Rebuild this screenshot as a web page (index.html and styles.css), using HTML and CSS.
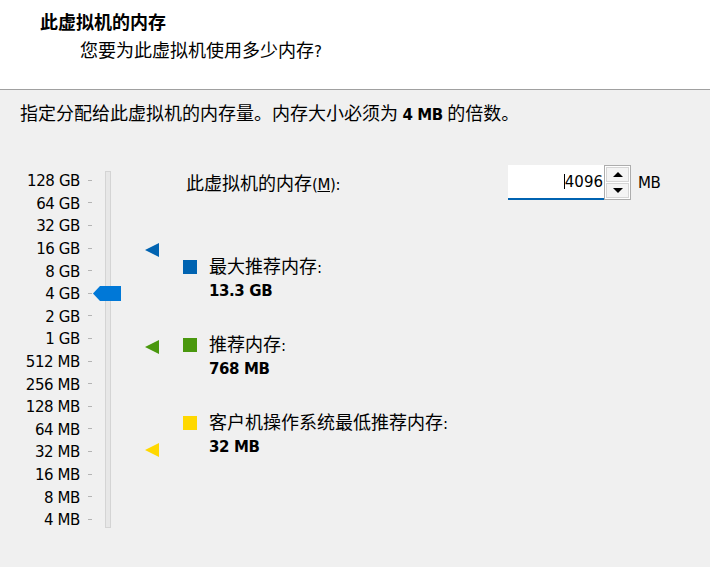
FILE: index.html
```html
<!DOCTYPE html>
<html lang="zh-CN">
<head>
<meta charset="utf-8">
<title>此虚拟机的内存</title>
<link rel="stylesheet" href="styles.css">
</head>
<body>
<div class="header">
  <div class="title"><span class="zh">此虚拟机的内存</span></div>
  <div class="subtitle"><span class="zh">您要为此虚拟机使用多少内存</span>?</div>
</div>
<div class="content">
  <p class="intro"><span class="zh">指定分配给此虚拟机的内存量。内存大小必须为</span> <b>4 MB</b> <span class="zh">的倍数。</span></p>
  <div class="main">
    <div class="slider">
      <div class="scale">
        <div class="row"><span class="lbl">128 GB</span><span class="tick"></span></div>
        <div class="row"><span class="lbl">64 GB</span><span class="tick"></span></div>
        <div class="row"><span class="lbl">32 GB</span><span class="tick"></span></div>
        <div class="row"><span class="lbl">16 GB</span><span class="tick"></span></div>
        <div class="row"><span class="lbl">8 GB</span><span class="tick"></span></div>
        <div class="row"><span class="lbl">4 GB</span><span class="tick"></span></div>
        <div class="row"><span class="lbl">2 GB</span><span class="tick"></span></div>
        <div class="row"><span class="lbl">1 GB</span><span class="tick"></span></div>
        <div class="row"><span class="lbl">512 MB</span><span class="tick"></span></div>
        <div class="row"><span class="lbl">256 MB</span><span class="tick"></span></div>
        <div class="row"><span class="lbl">128 MB</span><span class="tick"></span></div>
        <div class="row"><span class="lbl">64 MB</span><span class="tick"></span></div>
        <div class="row"><span class="lbl">32 MB</span><span class="tick"></span></div>
        <div class="row"><span class="lbl">16 MB</span><span class="tick"></span></div>
        <div class="row"><span class="lbl">8 MB</span><span class="tick"></span></div>
        <div class="row"><span class="lbl">4 MB</span><span class="tick"></span></div>
      </div>
      <div class="track"></div>
      <svg class="thumb" width="28" height="15" viewBox="0 0 28 15"><polygon points="0,7.5 7,0 28,0 28,15 7,15" fill="#0078d7"/></svg>
      <span class="marker marker-max"></span>
      <span class="marker marker-rec"></span>
      <span class="marker marker-min"></span>
    </div>
    <div class="panel">
      <div class="memrow">
        <label class="memlabel"><span class="zh">此虚拟机的内存</span>(<u>M</u>):</label>
        <div class="spin">
          <div class="spin-input"><span class="caret"></span>4096</div>
          <div class="spin-btns">
            <div class="btn"><span class="arrow-up"></span></div>
            <div class="btn"><span class="arrow-down"></span></div>
          </div>
        </div>
        <span class="unit">MB</span>
      </div>
      <div class="legend">
        <div class="item">
          <span class="sw sw-blue"></span>
          <div class="txt"><div class="lab"><span class="zh">最大推荐内存</span>:</div><div class="val">13.3 GB</div></div>
        </div>
        <div class="item">
          <span class="sw sw-green"></span>
          <div class="txt"><div class="lab"><span class="zh">推荐内存</span>:</div><div class="val">768 MB</div></div>
        </div>
        <div class="item">
          <span class="sw sw-yellow"></span>
          <div class="txt"><div class="lab"><span class="zh">客户机操作系统最低推荐内存</span>:</div><div class="val">32 MB</div></div>
        </div>
      </div>
    </div>
  </div>
</div>
</body>
</html>
```
FILE: styles.css
```css
html, body {
  margin: 0;
  padding: 0;
}
body {
  width: 710px;
  height: 567px;
  overflow: hidden;
  background: #f0f0f0;
  color: #000;
  font-family: "DejaVu Sans", "Noto Sans CJK SC", sans-serif;
  font-size: 15px;
  letter-spacing: -0.4px;
  line-height: 24px;
}
.zh {
  font-family: "Noto Sans CJK SC", "DejaVu Sans", sans-serif;
  font-size: 18px;
  line-height: 1;
  letter-spacing: 0;
}
.header {
  height: 90px;
  box-sizing: border-box;
  background: #fff;
  border-bottom: 1px solid #a0a0a0;
  padding: 12px 0 0 40px;
}
.title {
  font-weight: bold;
  line-height: 24px;
}
.subtitle {
  margin-top: 4px;
  padding-left: 40px;
  line-height: 24px;
}
.content {
  padding-left: 20px;
}
.intro {
  margin: 13px 0 0;
  line-height: 24px;
}
.intro b {
  font-weight: bold;
}
.main {
  margin-top: 38px;
  display: flex;
  align-items: flex-start;
}
.slider {
  position: relative;
  width: 163px;
  height: 370px;
  display: flex;
  align-items: flex-start;
  padding-top: 5px;
  box-sizing: border-box;
}
.scale {
  display: grid;
  grid-auto-rows: 22.6px;
}
.row {
  display: flex;
  align-items: center;
}
.lbl {
  width: 60px;
  text-align: right;
  line-height: 20px;
  white-space: nowrap;
}
.tick {
  width: 4px;
  height: 1px;
  margin-left: 8px;
  margin-top: -2px;
  background: #b4b4b4;
}
.track {
  margin-left: 13px;
  margin-top: 1px;
  width: 6px;
  height: 357px;
  box-sizing: border-box;
  border: 1px solid #d4d4d4;
  background: #e7e7e7;
}
.thumb {
  position: absolute;
  left: 73px;
  top: 121px;
}
.marker {
  position: absolute;
  left: 125px;
  width: 0;
  height: 0;
  border-top: 7px solid transparent;
  border-bottom: 7px solid transparent;
  border-right: 14px solid #0063b1;
}
.marker-max { top: 78px; border-right-color: #0063b1; }
.marker-rec { top: 175px; border-right-color: #4a980e; }
.marker-min { top: 278px; border-right-color: #ffd800; }
.panel {
  flex: 1;
}
.memrow {
  display: flex;
  align-items: center;
  height: 35px;
}
.memlabel {
  flex: 0 0 322px;
  padding: 5px 0 0 3px;
}
.memlabel u {
  text-decoration: underline;
}
.spin {
  display: flex;
  height: 35px;
}
.spin-input {
  width: 96px;
  height: 35px;
  box-sizing: border-box;
  background: #fff;
  border-bottom: 2px solid #0063b1;
  display: flex;
  align-items: center;
  justify-content: flex-end;
  padding: 0 1px 0 0;
  letter-spacing: 0;
}
.caret {
  width: 1px;
  height: 15px;
  background: #000;
}
.spin-btns {
  width: 27px;
  height: 35px;
  box-sizing: border-box;
  border: 1px solid #adadad;
  background: #fff;
  display: flex;
  flex-direction: column;
  padding: 1px;
  gap: 1px;
}
.btn {
  flex: 1;
  box-sizing: border-box;
  border: 1px solid #d6d6d6;
  background: #f4f4f4;
  display: flex;
  align-items: center;
  justify-content: center;
}
.arrow-up {
  width: 0;
  height: 0;
  border-left: 5px solid transparent;
  border-right: 5px solid transparent;
  border-bottom: 5px solid #000;
}
.arrow-down {
  width: 0;
  height: 0;
  border-left: 5px solid transparent;
  border-right: 5px solid transparent;
  border-top: 5px solid #000;
}
.unit {
  margin-left: 7px;
}
.legend {
  margin-top: 56px;
  display: flex;
  flex-direction: column;
  gap: 31px;
}
.item {
  display: flex;
  gap: 12px;
}
.sw {
  flex: 0 0 14px;
  height: 14px;
  margin-top: 4px;
}
.sw-blue { background: #0063b1; }
.sw-green { background: #4a980e; }
.sw-yellow { background: #ffd800; }
.lab {
  line-height: 24px;
}
.val {
  font-weight: bold;
  line-height: 23px;
}
```
